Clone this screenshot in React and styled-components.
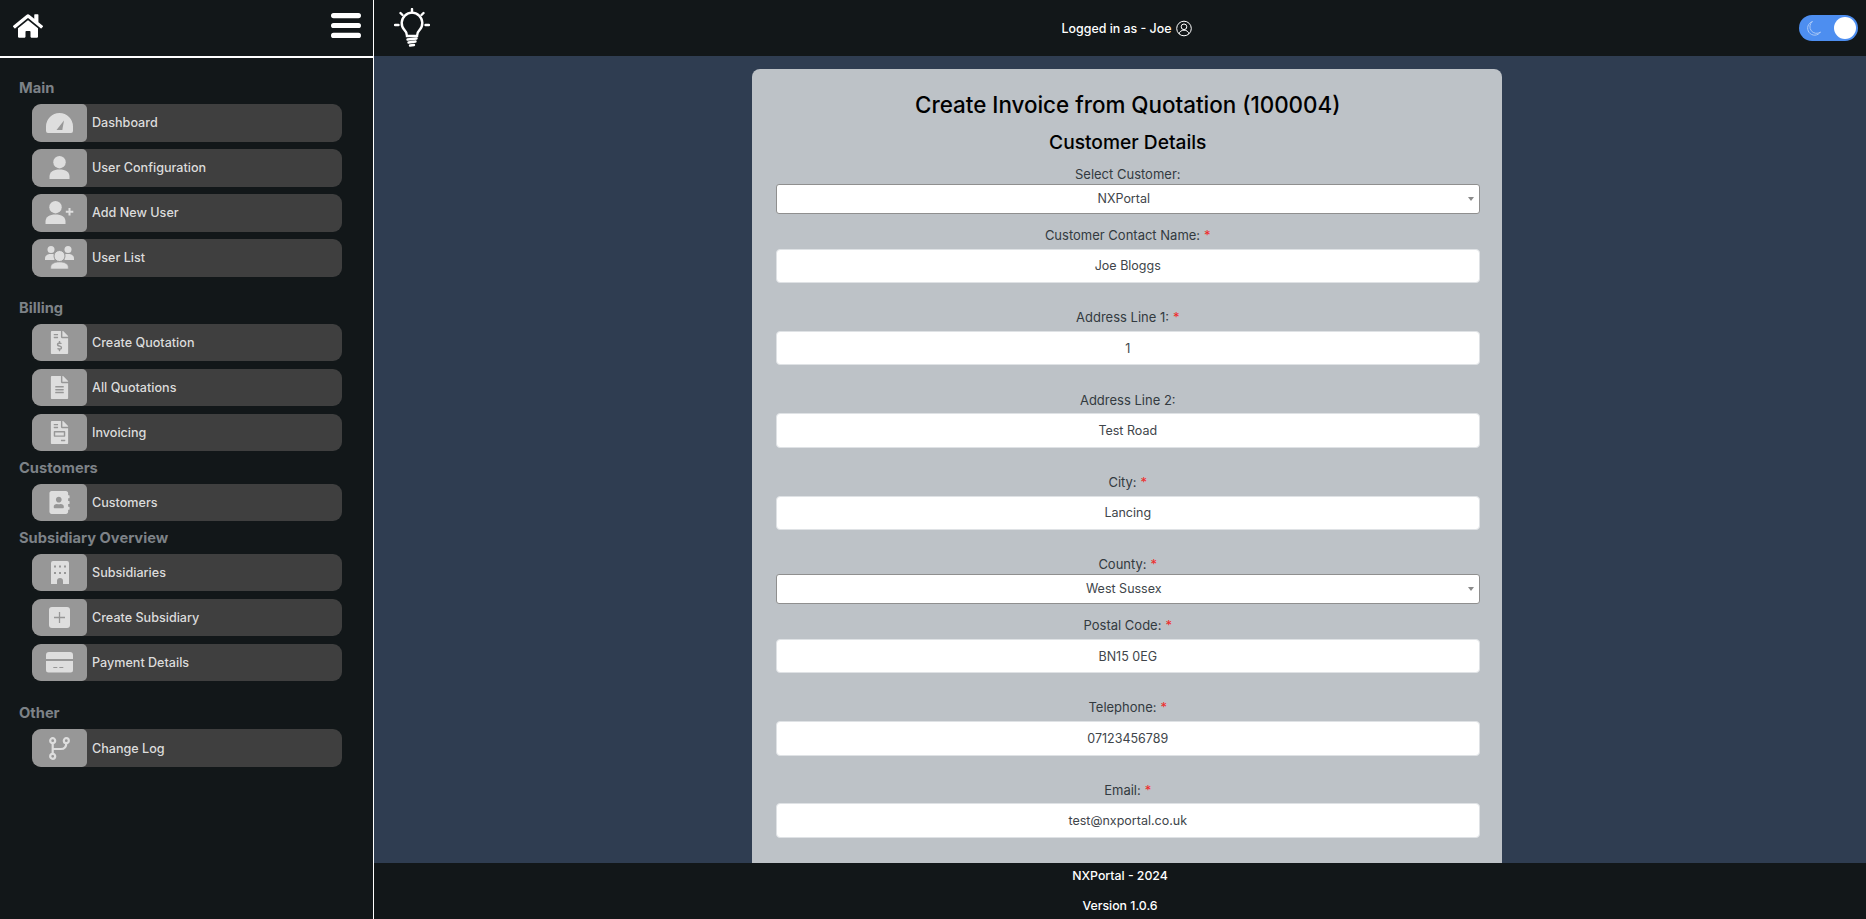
import React from "react";
import styled, { createGlobalStyle } from "styled-components";
import { FaHome, FaFileInvoiceDollar, FaFileAlt, FaFileInvoice, FaAddressBook } from "react-icons/fa";

const Global = createGlobalStyle`
  html, body { margin: 0; padding: 0; height: 100%; overflow: hidden; }
  body { font-family: Inter, "Open Sans", "Liberation Sans", sans-serif; background: #2f3d51; }
  * { box-sizing: border-box; }
`;

const Shell = styled.div`
  display: grid;
  grid-template-columns: 374px 1fr;
  height: 919px;
  overflow: hidden;
`;

const Sidebar = styled.aside`
  background: #121719;
  border-right: 1px solid #fff;
  display: flex;
  flex-direction: column;
`;

const SideTop = styled.div`
  height: 58px;
  border-bottom: 2px solid #fff;
  padding: 0 12px 5px 13px;
  display: flex;
  justify-content: space-between;
  align-items: center;
  color: #fff;
`;

const Nav = styled.nav`
  padding: 20px 0 0 19px;
  display: flex;
  flex-direction: column;
`;

const SectionTitle = styled.h3`
  margin: ${(p) => p.$top}px 0 6px;
  height: 20px;
  line-height: 20px;
  font-size: 14.7px;
  font-weight: 700;
  color: #7d8287;
`;

const List = styled.div`
  display: flex;
  flex-direction: column;
  gap: 7.4px;
  padding-left: 13px;
`;

const Item = styled.a`
  width: 310px;
  height: 37.6px;
  display: flex;
  align-items: center;
  background: #3f3f3f;
  border-radius: 9px;
  overflow: hidden;
  color: #dcdcdc;
  font-size: 12.6px;
  font-weight: 500;
`;

const IconBox = styled.span`
  width: 55px;
  height: 100%;
  flex: none;
  margin-right: 5px;
  background: #979797;
  color: #dedede;
  border-radius: 5px;
  display: flex;
  align-items: center;
  justify-content: center;
`;

const Main = styled.div`
  display: flex;
  flex-direction: column;
  min-width: 0;
  height: 919px;
`;

const TopBar = styled.header`
  height: 56px;
  flex: none;
  background: #121719;
  display: grid;
  grid-template-columns: 1fr auto 1fr;
  align-items: center;
  padding: 0 8px 0 20px;
  color: #fff;
`;

const Logged = styled.div`
  display: flex;
  align-items: center;
  gap: 5px;
  padding-left: 2px;
  font-size: 12.4px;
  font-weight: 500;
  color: #fff;
`;

const Toggle = styled.div`
  justify-self: end;
  width: 59px;
  height: 26px;
  border-radius: 13px;
  background: #4d8ef0;
  display: flex;
  align-items: center;
  justify-content: space-between;
  padding: 0 2px 0 7px;
`;

const Thumb = styled.span`
  width: 22px;
  height: 22px;
  border-radius: 50%;
  background: #fff;
`;

const Content = styled.main`
  flex: 1;
  min-height: 0;
  overflow: hidden;
  background: #2f3d51;
  padding: 13px 0 0 14px;
  display: flex;
  justify-content: center;
`;

const Card = styled.section`
  width: 750px;
  height: 1200px;
  flex: none;
  background: #bdc2c7;
  border-radius: 8px;
  padding: 18px 22px 0 23.5px;
  display: flex;
  flex-direction: column;
  align-items: center;
`;

const Title = styled.h1`
  margin: 0;
  height: 36px;
  line-height: 36px;
  font-size: 22.4px;
  font-weight: 500;
  color: #000;
`;

const Sub = styled.h2`
  margin: 1px 0 4px;
  height: 36px;
  line-height: 36px;
  font-size: 19.2px;
  font-weight: 500;
  color: #000;
`;

const Field = styled.div`
  width: 100%;
  display: flex;
  flex-direction: column;
  margin-bottom: ${(p) => p.$after}px;
`;

const Label = styled.label`
  height: 20px;
  line-height: 20px;
  margin-bottom: ${(p) => p.$gap}px;
  text-align: center;
  font-size: 13px;
  color: #333a40;
`;

const Req = styled.span`
  color: #f02a2a;
  margin-left: 4px;
`;

const Input = styled.input`
  width: 100%;
  height: 34.5px;
  background: #fff;
  border: 1px solid #dfe2e5;
  border-radius: 4px;
  text-align: center;
  font: 400 12.5px Inter, "Open Sans", sans-serif;
  color: #40454a;
  outline: none;
`;

const SelectWrap = styled.div`
  position: relative;
  width: 100%;
  height: 29.500px;
`;

const Select = styled.select`
  appearance: none;
  width: 100%;
  height: 100%;
  background: #fff;
  border: 1px solid #8f8f8f;
  border-radius: 3px;
  padding: 0 20px 0 12px;
  text-align: center;
  font: 400 12.5px Inter, "Open Sans", sans-serif;
  color: #40454a;
`;

const Arrow = styled.span`
  position: absolute;
  right: 6px;
  top: 13px;
  border-left: 3px solid transparent;
  border-right: 3px solid transparent;
  border-top: 4px solid #8a8a8a;
`;

const Footer = styled.footer`
  height: 56px;
  flex: none;
  background: #121719;
  display: flex;
  flex-direction: column;
  align-items: center;
  color: #fff;
  font-size: 12.3px;
  font-weight: 500;
  padding-top: 3px;
  gap: 10px;
  line-height: 20px;
`;

const BOX = "#979797";

const Burger = () => (
  <svg width="30" height="25" viewBox="0 0 30 25" stroke="#fff" strokeWidth="5.2" strokeLinecap="round">
    <path d="M2.600 2.600h24.800M2.600 12.500h24.800M2.600 22.400h24.800" />
  </svg>
);

const Bulb = () => (
  <svg width="36" height="40" viewBox="0 0 36 40" fill="none" stroke="#fff" strokeWidth="2.4" strokeLinecap="round">
    <path d="M13 28c0-3-1-4.500-2.800-6.300a10.300 10.300 0 1 1 15.600 0c-1.800 1.800-2.800 3.300-2.800 6.300z" />
    <path d="M13.500 31.500l9-1M14.500 34.500l7-1M16 37.500l4-.5" />
    <path d="M18 1v3.500M6.500 5l2 2M29.500 5l-2 2M1 17h3.500M31.500 17h3.500" />
  </svg>
);

const Moon = () => (
  <svg width="16" height="17" viewBox="0 0 16 17" fill="none" stroke="#a9c8f7" strokeWidth="1">
    <path d="M6.500 1.500a7 7 0 1 0 8 10.500a6.500 6.500 0 0 1-8-10.500z" />
  </svg>
);

const UserCircle = () => (
  <svg width="16" height="17" viewBox="0 0 16 17" fill="none" stroke="#fff" strokeWidth="1">
    <circle cx="8" cy="8.500" r="7.300" />
    <circle cx="8" cy="6.800" r="2.800" />
    <path d="M3 14c.6-2.600 2.500-3.800 5-3.800s4.400 1.200 5 3.800" />
  </svg>
);

const Gauge = () => (
  <svg width="27" height="20" viewBox="0 0 27 20">
    <path fill="#dedede" d="M13.500 0a13.500 13.500 0 0 1 13.500 13.500V18a2 2 0 0 1-2 2H2a2 2 0 0 1-2-2V13.500A13.500 13.500 0 0 1 13.500 0z" />
    <path fill={BOX} d="M10.500 17h5.800l1.700-9.500z" />
  </svg>
);

const Person = () => (
  <>
    <circle cx="10.500" cy="6.200" r="6.200" />
    <path d="M.5 23v-2.500c0-4.500 4-7 10-7s10 2.500 10 7V23z" />
  </>
);

const User = () => (
  <svg width="21" height="23" viewBox="0 0 21 23" fill="#dedede"><Person /></svg>
);

const UserAdd = () => (
  <svg width="29" height="23" viewBox="0 0 29 23" fill="#dedede">
    <Person />
    <path d="M24.500 7v7.500M20.800 10.700h7.500" stroke="#dedede" strokeWidth="2" />
  </svg>
);

const Group = () => (
  <svg width="29" height="23" viewBox="0 0 29 23" fill="#dedede">
    <circle cx="6" cy="3.500" r="3.500" />
    <circle cx="23" cy="3.500" r="3.500" />
    <path d="M0 14v-1.500C0 9.500 2.500 8 6 8s5 1 6 3l-3 3z" />
    <path d="M29 14v-1.500C29 9.500 26.500 8 23 8s-5 1-6 3l3 3z" />
    <circle cx="14.500" cy="10" r="5.500" stroke={BOX} strokeWidth="1" />
    <path d="M5.700 23v-2c0-3 3.500-5 8.800-5s8.800 2 8.800 5v2z" stroke={BOX} strokeWidth=".6" />
  </svg>
);

const Building = () => (
  <svg width="18" height="23" viewBox="0 0 18 23">
    <path fill="#dedede" d="M2 0h14a2 2 0 0 1 2 2v21h-6v-3a3 3 0 0 0-6 0v3H0V2a2 2 0 0 1 2-2z" />
    <path fill={BOX} d="M3 4.500h2v2H3zM8 4.500h2v2H8zM13 4.500h2v2h-2zM3 11h2v2H3zM8 11h2v2H8zM13 11h2v2h-2z" />
  </svg>
);

const PlusBox = () => (
  <svg width="21" height="21" viewBox="0 0 21 21">
    <rect width="21" height="21" rx="3" fill="#dedede" />
    <path d="M10.500 5v11M5 10.500h11" stroke={BOX} strokeWidth="1.300" />
  </svg>
);

const Card2 = () => (
  <svg width="27" height="21" viewBox="0 0 27 21">
    <path fill="#dedede" d="M3 0h21a3 3 0 0 1 3 3v4H0V3a3 3 0 0 1 3-3zM0 9h27v9a2.500 2.500 0 0 1-2.500 2.500h-22A2.500 2.500 0 0 1 0 18z" />
    <path d="M7.300 15.500h4M13.300 15.500h4" stroke={BOX} strokeWidth="1" />
  </svg>
);

const Branch = () => (
  <svg width="21" height="23" viewBox="0 0 21 23" fill="none" stroke="#dedede" strokeWidth="2.200">
    <circle cx="3.700" cy="3.700" r="2.500" />
    <circle cx="17.300" cy="3.700" r="2.500" />
    <circle cx="3.700" cy="19.300" r="2.500" />
    <path d="M3.700 6.200v10.600M17.300 6.200c0 4-2.500 5.800-5.500 5.800H3.700" />
  </svg>
);

const sections = [
  { title: "Main", top: 0, items: [
    ["Dashboard", <Gauge />],
    ["User Configuration", <User />],
    ["Add New User", <UserAdd />],
    ["User List", <Group />],
  ]},
  { title: "Billing", top: 21, items: [
    ["Create Quotation", <FaFileInvoiceDollar size={23} />],
    ["All Quotations", <FaFileAlt size={23} />],
    ["Invoicing", <FaFileInvoice size={23} />],
  ]},
  { title: "Customers", top: 6.5, items: [["Customers", <FaAddressBook size={23} />]] },
  { title: "Subsidiary Overview", top: 6.5, items: [
    ["Subsidiaries", <Building />],
    ["Create Subsidiary", <PlusBox />],
    ["Payment Details", <Card2 />],
  ]},
  { title: "Other", top: 22, items: [["Change Log", <Branch />]] },
];

const TextField = ({ label, value, required }) => (
  <Field $after={24.1}>
    <Label $gap={3.7}>{label}{required && <Req>*</Req>}</Label>
    <Input readOnly value={value} />
  </Field>
);

const SelectField = ({ label, value, required }) => (
  <Field $after={11.5}>
    <Label $gap={0}>{label}{required && <Req>*</Req>}</Label>
    <SelectWrap>
      <Select value={value} onChange={() => {}}><option>{value}</option></Select>
      <Arrow />
    </SelectWrap>
  </Field>
);

export default function App() {
  return (
    <Shell>
      <Global />
      <Sidebar>
        <SideTop>
          <FaHome size={30} />
          <Burger />
        </SideTop>
        <Nav>
          {sections.map((s) => (
            <div key={s.title}>
              <SectionTitle $top={s.top}>{s.title}</SectionTitle>
              <List>
                {s.items.map(([name, icon]) => (
                  <Item key={name}><IconBox>{icon}</IconBox>{name}</Item>
                ))}
              </List>
            </div>
          ))}
        </Nav>
      </Sidebar>
      <Main>
        <TopBar>
          <Bulb />
          <Logged>Logged in as - Joe <UserCircle /></Logged>
          <Toggle><Moon /><Thumb /></Toggle>
        </TopBar>
        <Content>
          <Card>
            <Title>Create Invoice from Quotation (100004)</Title>
            <Sub>Customer Details</Sub>
            <SelectField label="Select Customer:" value="NXPortal" />
            <TextField label="Customer Contact Name:" value="Joe Bloggs" required />
            <TextField label="Address Line 1:" value="1" required />
            <TextField label="Address Line 2:" value="Test Road" />
            <TextField label="City:" value="Lancing" required />
            <SelectField label="County:" value="West Sussex" required />
            <TextField label="Postal Code:" value="BN15 0EG" required />
            <TextField label="Telephone:" value="07123456789" required />
            <TextField label="Email:" value="test@nxportal.co.uk" required />
          </Card>
        </Content>
        <Footer>
          <div>NXPortal - 2024</div>
          <div>Version 1.0.6</div>
        </Footer>
      </Main>
    </Shell>
  );
}
